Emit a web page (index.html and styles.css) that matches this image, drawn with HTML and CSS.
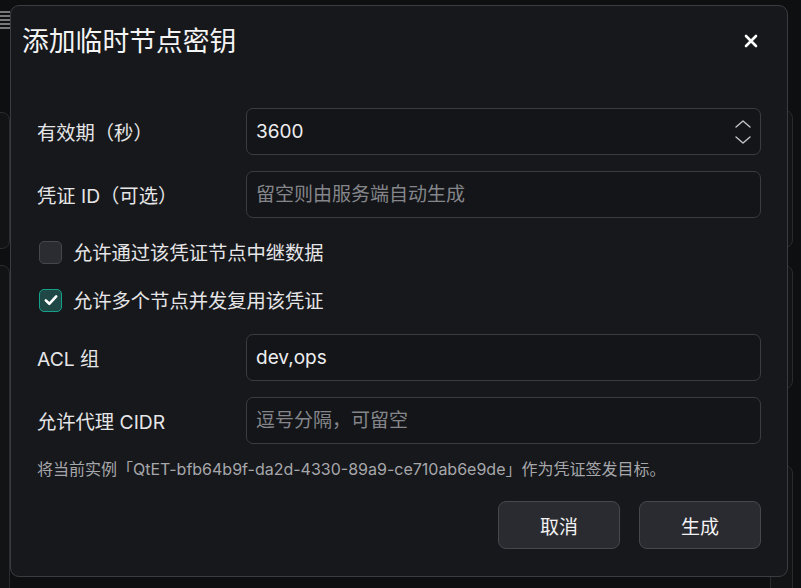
FILE: index.html
```html
<!DOCTYPE html>
<html lang="zh-CN">
<head>
<meta charset="utf-8">
<title>添加临时节点密钥</title>
<link rel="stylesheet" href="styles.css">
</head>
<body>
<div class="backdrop">
  <div class="bg-icon">
    <svg width="12" height="22" viewBox="0 0 12 22"><g stroke="#9a9ba0" stroke-width="1.5"><path d="M0 4h12M0 8h12M0 12h12M0 16h12M0 20h12"/></g></svg>
  </div>
  <div class="bg-card bg-card-l1"></div>
  <div class="bg-card bg-card-l2"></div>
  <div class="bg-card bg-card-r1"></div>
  <div class="bg-card bg-card-r2"></div>
  <div class="bg-card bg-card-r3"></div>
</div>

<div class="dialog" role="dialog">
  <div class="dialog-header">
    <h2 class="dialog-title">添加临时节点密钥</h2>
    <button class="close-btn" aria-label="关闭">
      <svg width="14" height="14" viewBox="0 0 14 14"><path d="M2 2L12 12M12 2L2 12" stroke="#ffffff" stroke-width="2.6" stroke-linecap="round"/></svg>
    </button>
  </div>

  <div class="dialog-body">
    <div class="form-row">
      <label class="form-label">有效期（秒）</label>
      <div class="field">
        <input class="field-input" type="text" value="3600">
        <svg class="spinner" width="18" height="28" viewBox="0 0 18 28"><g fill="none" stroke="#c4c5c9" stroke-width="1.4" stroke-linecap="round" stroke-linejoin="round"><path d="M2 9L9 3L16 9"/><path d="M2 19L9 25L16 19"/></g></svg>
      </div>
    </div>
    <div class="form-row">
      <label class="form-label">凭证 ID（可选）</label>
      <div class="field">
        <input class="field-input" type="text" placeholder="留空则由服务端自动生成">
      </div>
    </div>

    <div class="check-group">
      <label class="check-row">
        <span class="checkbox"></span>
        <span class="check-text">允许通过该凭证节点中继数据</span>
      </label>
      <label class="check-row">
        <span class="checkbox checked">
          <svg width="16" height="16" viewBox="0 0 16 16"><path d="M2.8 8.4L6.3 11.8L13.2 4.4" fill="none" stroke="#ffffff" stroke-width="2.6" stroke-linecap="round" stroke-linejoin="round"/></svg>
        </span>
        <span class="check-text">允许多个节点并发复用该凭证</span>
      </label>
    </div>

    <div class="form-row">
      <label class="form-label">ACL 组</label>
      <div class="field">
        <input class="field-input" type="text" value="dev,ops">
      </div>
    </div>
    <div class="form-row">
      <label class="form-label">允许代理 CIDR</label>
      <div class="field">
        <input class="field-input" type="text" placeholder="逗号分隔，可留空">
      </div>
    </div>

    <p class="hint">将当前实例「QtET-bfb64b9f-da2d-4330-89a9-ce710ab6e9de」作为凭证签发目标。</p>
  </div>

  <div class="dialog-footer">
    <button class="btn">取消</button>
    <button class="btn">生成</button>
  </div>
</div>
</body>
</html>
```

FILE: styles.css
```css
* { box-sizing: border-box; }

html, body {
  margin: 0;
  padding: 0;
  width: 801px;
  height: 588px;
  overflow: hidden;
  background: #0e0f11;
  font-family: "Inter", "Noto Sans CJK SC", "Noto Sans", sans-serif;
  color: #e8e8ea;
}

.backdrop {
  position: fixed;
  inset: 0;
}

.bg-icon {
  position: absolute;
  left: -2px;
  top: 8px;
}

.bg-card {
  position: absolute;
  border: 1px solid #2a2b2f;
  border-radius: 8px;
  background: #121315;
}
.bg-card-l1 { left: -40px; top: 112px; width: 50px; height: 137px; }
.bg-card-l2 { left: -40px; top: 265px; width: 50px; height: 330px; }
.bg-card-r1 { left: 770px; top: 110px; width: 23px; height: 138px; }
.bg-card-r2 { left: 770px; top: 265px; width: 23px; height: 124px; }
.bg-card-r3 { left: 770px; top: 465px; width: 23px; height: 140px; }

.dialog {
  position: fixed;
  left: 10px;
  top: 5px;
  width: 778px;
  height: 572px;
  background: #17181b;
  border: 1px solid #3b3c41;
  border-radius: 9px;
  display: flex;
  flex-direction: column;
  padding: 17px 26px 27px 26px;
}

.dialog-header {
  display: flex;
  align-items: center;
  justify-content: space-between;
  height: 36px;
  margin-left: -15px;
}

.dialog-title {
  margin: 0;
  font-size: 26.8px;
  font-weight: 400;
  line-height: 36px;
  color: #f4f4f5;
}

.close-btn {
  background: none;
  border: none;
  padding: 0;
  margin-right: 3px;
  width: 14px;
  height: 14px;
  display: flex;
  cursor: pointer;
}

.dialog-body {
  margin-top: 49px;
  display: flex;
  flex-direction: column;
  gap: 16px;
}

.form-row {
  display: flex;
  align-items: center;
}

.form-label {
  width: 209px;
  flex: none;
  font-size: 19.3px;
  color: #e6e6e8;
}

.field {
  flex: 1;
  height: 47px;
  display: flex;
  align-items: center;
  background: #141518;
  border: 1px solid #3b3c41;
  border-radius: 7px;
  padding: 0 8px 0 9px;
}

.field-input {
  flex: 1;
  min-width: 0;
  background: transparent;
  border: none;
  outline: none;
  font-family: inherit;
  font-size: 19px;
  color: #eeeef0;
  padding: 0;
}

.field-input::placeholder {
  color: #85868b;
}

.spinner {
  flex: none;
}

.check-group {
  display: flex;
  flex-direction: column;
  gap: 12px;
}

.check-row {
  height: 36px;
  display: flex;
  align-items: center;
  gap: 11px;
  padding-left: 2px;
}

.checkbox {
  width: 23px;
  height: 23px;
  border-radius: 5px;
  border: 1.5px solid #46474c;
  background: #2a2c31;
  display: flex;
  align-items: center;
  justify-content: center;
}

.checkbox.checked {
  background: #1e4745;
  border-color: #15a08a;
}

.check-text {
  font-size: 19.3px;
  color: #e6e6e8;
}

.hint {
  margin: -2px 0 0 0;
  font-size: 16px;
  line-height: 22px;
  color: #a6a7ab;
}

.dialog-footer {
  margin-top: auto;
  display: flex;
  justify-content: flex-end;
  gap: 19px;
}

.btn {
  width: 122px;
  height: 48px;
  background: #2a2b30;
  border: 1px solid #47484d;
  border-radius: 8px;
  color: #f2f2f3;
  font-family: inherit;
  font-size: 19px;
  cursor: pointer;
}
```
